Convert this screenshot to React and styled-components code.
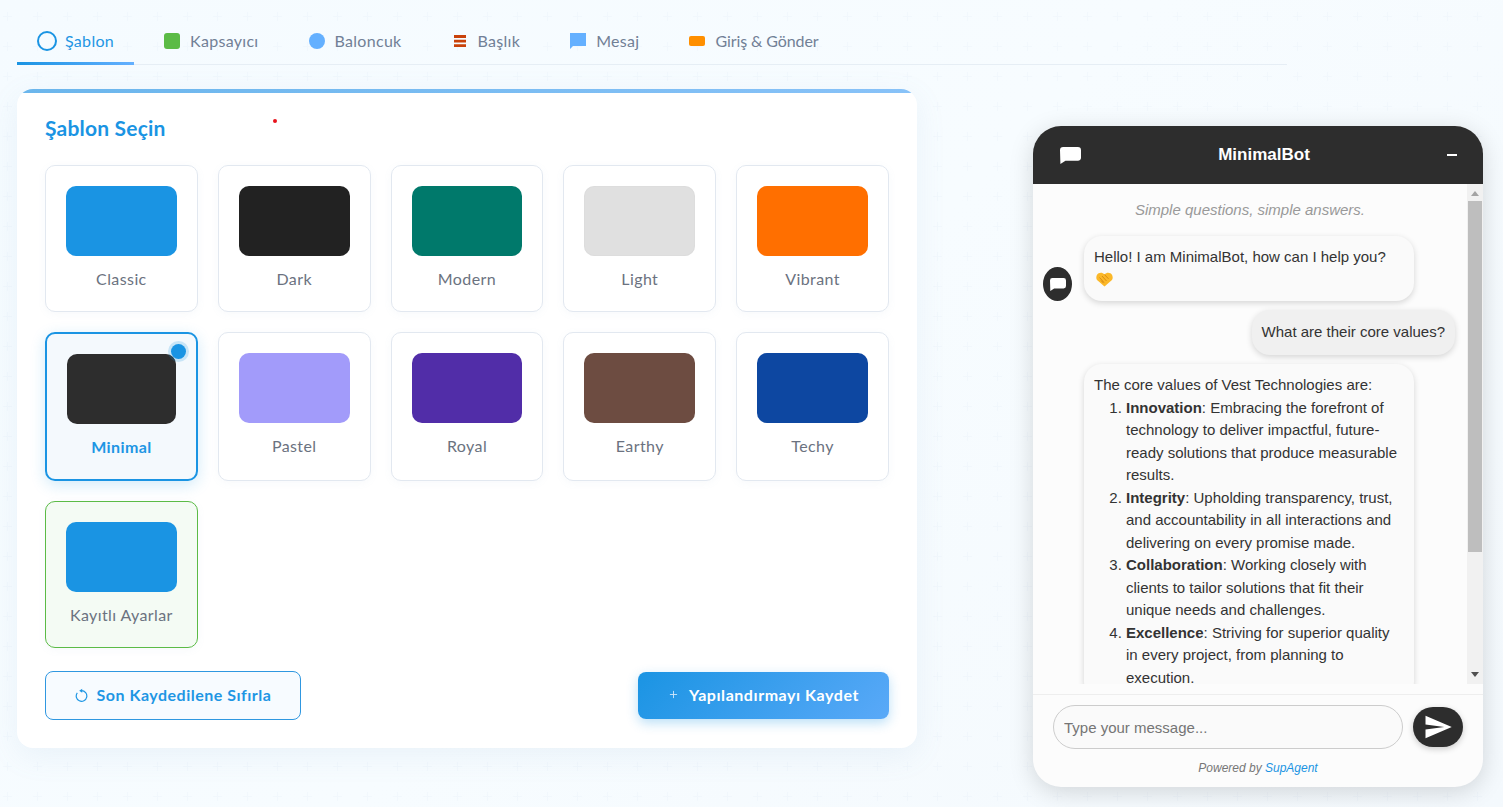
import React from "react";
import styled, { createGlobalStyle } from "styled-components";
import { MdSend } from "react-icons/md";
import { Plus } from "lucide-react";

const BLUE = "#1a94e3";
const UI_FONT = `"Lato", "Noto Sans", sans-serif`;
const CHAT_FONT = `"Liberation Sans", Arial, sans-serif`;

const PLUS_TILE = `url("data:image/svg+xml,%3Csvg width='30' height='30' xmlns='http://www.w3.org/2000/svg'%3E%3Cpath d='M7 3h1v9H7zM3 7h9v1H3z' fill='%23a9c4dc' fill-opacity='.08'/%3E%3C/svg%3E")`;

const templates = [
  { name: "Classic", color: "#1a94e3" },
  { name: "Dark", color: "#222222" },
  { name: "Modern", color: "#00796b" },
  { name: "Light", color: "#e0e0e0", edge: true },
  { name: "Vibrant", color: "#ff6f00" },
  { name: "Minimal", color: "#2d2d2d", selected: true },
  { name: "Pastel", color: "#a29bfa" },
  { name: "Royal", color: "#512da8" },
  { name: "Earthy", color: "#6d4c41" },
  { name: "Techy", color: "#0d47a1" },
  { name: "Kayıtlı Ayarlar", color: "#1a94e3", saved: true },
];

const values = [
  ["Innovation", ": Embracing the forefront of technology to deliver impactful, future-ready solutions that produce measurable results."],
  ["Integrity", ": Upholding transparency, trust, and accountability in all interactions and delivering on every promise made."],
  ["Collaboration", ": Working closely with clients to tailor solutions that fit their unique needs and challenges."],
  ["Excellence", ": Striving for superior quality in every project, from planning to execution."],
];

function BarsIcon() {
  return (
    <svg width="16" height="16" viewBox="0 0 16 16">
      <path d="M2 2h12v3H2zM2 6.8h12v2.6H2zM2 11.2h12V14H2z" fill="#c9420a" />
    </svg>
  );
}

function BubbleIcon() {
  return (
    <svg width="16" height="16" viewBox="0 0 16 16">
      <path d="M0 0h16v13H3l-3 3z" fill="#64b0ff" />
    </svg>
  );
}

function ChatGlyph({ width, height }) {
  return (
    <svg width={width} height={height} viewBox="0 0 20 16">
      <path d="M3 0h14a3 3 0 0 1 3 3v7a3 3 0 0 1-3 3H5.2L.4 16 0 3a3 3 0 0 1 3-3z" fill="#fff" />
    </svg>
  );
}

function ResetIcon() {
  return (
    <svg width="13" height="14" viewBox="0 0 13 14" fill="none">
      <path d="M2.3 4.8A5.3 5.3 0 1 0 6.5 2.7" stroke="#1e96e4" strokeWidth="1.2" />
      <path d="M7.2 .7v4L4.2 2.7z" fill="#1e96e4" />
    </svg>
  );
}

function HandshakeEmoji() {
  return (
    <Emoji width="17" height="15" viewBox="0 0 17 15">
      <path d="M8.5 14.6 1.6 8.6C-.5 6.6.1 2.5 2.6 1.2 4.6.2 6.8.6 8.5 2.2 10.2.6 12.4.2 14.4 1.2c2.5 1.3 3.1 5.4 1 7.4z" fill="#fbb829" />
      <path d="M3.5 5.5 8 10.5M6 4l4.5 5M8.5 2.6l4 4.2M5 8.5l2.5 2.6" stroke="#c9770f" strokeWidth=".7" fill="none" />
    </Emoji>
  );
}

function TemplateCard({ template }) {
  return (
    <Card $selected={template.selected} $saved={template.saved}>
      {template.selected && <SelectedDot />}
      <Swatch $color={template.color} $edge={template.edge} />
      <CardLabel $selected={template.selected}>{template.name}</CardLabel>
    </Card>
  );
}

export default function App() {
  return (
    <>
      <GlobalStyle />
      <Page>
        <Tabs>
          <Tab $active>
            <RingIcon />
            Şablon
          </Tab>
          <Tab>
            <ColorIcon $color="#5bbb46" $radius="3px" />
            Kapsayıcı
          </Tab>
          <Tab>
            <ColorIcon $color="#64b0ff" $radius="50%" />
            Baloncuk
          </Tab>
          <Tab>
            <BarsIcon />
            Başlık
          </Tab>
          <Tab>
            <BubbleIcon />
            Mesaj
          </Tab>
          <Tab $tight>
            <PillIcon />
            Giriş &amp; Gönder
          </Tab>
        </Tabs>

        <Content>
          <Panel>
            <RedDot />
            <PanelTitle>Şablon Seçin</PanelTitle>
            <TemplateGrid>
              {templates.map((t) => (
                <TemplateCard key={t.name} template={t} />
              ))}
            </TemplateGrid>
            <Actions>
              <ResetButton>
                <ResetIcon />
                Son Kaydedilene Sıfırla
              </ResetButton>
              <SaveButton>
                <Plus size={11} color="#cfe6fb" strokeWidth={2} />
                Yapılandırmayı Kaydet
              </SaveButton>
            </Actions>
          </Panel>

          <Chat>
            <ChatHeader>
              <ChatGlyph width={21} height={17} />
              <ChatTitle>MinimalBot</ChatTitle>
              <Minimize />
            </ChatHeader>
            <ChatBody>
              <Messages>
                <Tagline>Simple questions, simple answers.</Tagline>
                <BotRow>
                  <Avatar>
                    <ChatGlyph width={16} height={13} />
                  </Avatar>
                  <BotBubble>
                    Hello! I am MinimalBot, how can I help you?
                    <br />
                    <HandshakeEmoji />
                  </BotBubble>
                </BotRow>
                <UserBubble>What are their core values?</UserBubble>
                <BotRow>
                  <AvatarSlot />
                  <BotBubble>
                    The core values of Vest Technologies are:
                    <ValueList>
                      {values.map(([title, text]) => (
                        <li key={title}>
                          <strong>{title}</strong>
                          {text}
                        </li>
                      ))}
                    </ValueList>
                  </BotBubble>
                </BotRow>
              </Messages>
              <Scrollbar>
                <ScrollUp />
                <ScrollTrack>
                  <ScrollThumb />
                </ScrollTrack>
                <ScrollDown />
              </Scrollbar>
            </ChatBody>
            <Composer>
              <MessageInput placeholder="Type your message..." />
              <SendButton>
                <MdSend size={30} color="#fff" />
              </SendButton>
            </Composer>
            <Powered>
              Powered by <PoweredLink>SupAgent</PoweredLink>
            </Powered>
          </Chat>
        </Content>
      </Page>
    </>
  );
}

const GlobalStyle = createGlobalStyle`
  html, body {
    margin: 0;
    padding: 0;
  }
  * {
    box-sizing: border-box;
  }
`;

const Page = styled.div`
  width: 1503px;
  height: 807px;
  padding: 21px 20px 0 17px;
  overflow: hidden;
  font-family: ${UI_FONT};
  background-color: #f7fbff;
  background-image: ${PLUS_TILE}, linear-gradient(135deg, #f5fbff 0%, #f7fcff 50%, #f4f9fd 100%);
  background-position: 0 9px, 0 0;
`;

const Tabs = styled.div`
  display: flex;
  gap: 10px;
  width: 1270px;
  height: 44px;
  border-bottom: 1px solid #e6eef5;
`;

const Tab = styled.div`
  position: relative;
  display: flex;
  align-items: center;
  gap: 10px;
  height: 44px;
  padding: 0 20px 5px;
  font-size: 16px;
  font-weight: 400;
  letter-spacing: ${(p) => (p.$tight ? "-0.1px" : "0.3px")};
  color: ${(p) => (p.$active ? "#1e96e4" : "#718096")};
  ${(p) => p.$active && `
    gap: 8px;
    &::after {
      content: "";
      position: absolute;
      left: 0;
      right: 0;
      bottom: 0;
      height: 3px;
      background: linear-gradient(90deg, #1a94e3, #64b0ff);
    }
  `}
`;

const RingIcon = styled.span`
  width: 20px;
  height: 20px;
  border: 2px solid ${BLUE};
  border-radius: 50%;
`;

const ColorIcon = styled.span`
  width: 16px;
  height: 16px;
  background: ${(p) => p.$color};
  border-radius: ${(p) => p.$radius};
`;

const PillIcon = styled.span`
  width: 16px;
  height: 10px;
  background: #ff8f00;
  border-radius: 2px;
`;

const Content = styled.div`
  display: flex;
  justify-content: space-between;
  align-items: flex-start;
  margin-top: 24px;
`;

const Panel = styled.section`
  position: relative;
  width: 900px;
  padding: 28px;
  background: #fff;
  border-radius: 16px;
  overflow: hidden;
  box-shadow: 0 8px 30px rgba(120, 160, 200, 0.1);

  &::before {
    content: "";
    position: absolute;
    top: 0;
    left: 0;
    right: 0;
    height: 4px;
    background: linear-gradient(90deg, #6bb6ec, #88c2f8);
  }
`;

const RedDot = styled.span`
  position: absolute;
  left: 256px;
  top: 30px;
  width: 4px;
  height: 4px;
  border-radius: 50%;
  background: #e8121c;
`;

const PanelTitle = styled.h2`
  margin: -1px 0 25px;
  font-size: 21px;
  line-height: 24px;
  letter-spacing: 0.2px;
  font-weight: 700;
  color: ${BLUE};
`;

const TemplateGrid = styled.div`
  display: grid;
  grid-template-columns: repeat(5, 1fr);
  gap: 20px;
`;

const Card = styled.div`
  position: relative;
  padding: 20px;
  border: ${(p) => (p.$selected ? `2px solid ${BLUE}` : p.$saved ? "1px solid #5bbb46" : "1px solid #e2e8f0")};
  border-radius: 10px;
  background: ${(p) => (p.$selected ? "#f4f9fd" : p.$saved ? "#f4fbf4" : "#fff")};
  box-shadow: ${(p) => (p.$selected ? "0 4px 15px rgba(26, 148, 227, 0.2)" : "0 2px 8px rgba(120, 150, 190, 0.06)")};
  text-align: center;
`;

const SelectedDot = styled.span`
  position: absolute;
  top: 10px;
  right: 10px;
  width: 15px;
  height: 15px;
  border-radius: 50%;
  background: ${BLUE};
  box-shadow: 0 0 0 3px rgba(26, 148, 227, 0.2);
`;

const Swatch = styled.div`
  height: 70px;
  border-radius: 10px;
  background: ${(p) => p.$color};
  ${(p) => p.$edge && "box-shadow: inset 0 0 2px rgba(0, 0, 0, 0.06);"}
`;

const CardLabel = styled.div`
  margin: 11px 0 1px;
  font-size: 16px;
  line-height: 23px;
  letter-spacing: 0.4px;
  font-weight: ${(p) => (p.$selected ? 700 : 400)};
  color: ${(p) => (p.$selected ? "#1e96e4" : "#6b7280")};
`;

const Actions = styled.div`
  display: flex;
  justify-content: space-between;
  align-items: center;
  margin-top: 23px;
`;

const ResetButton = styled.button`
  display: flex;
  align-items: center;
  justify-content: center;
  gap: 9px;
  width: 256px;
  height: 49px;
  padding: 0 0 2px;
  border: 1px solid #2f97e0;
  border-radius: 8px;
  background: #f7fbff;
  color: #1e96e4;
  font-family: ${UI_FONT};
  font-size: 16px;
  font-weight: 700;
  letter-spacing: 0.5px;
`;

const SaveButton = styled.button`
  display: flex;
  align-items: center;
  justify-content: center;
  gap: 10px;
  width: 251px;
  height: 47px;
  padding: 0 0 2px;
  border: none;
  border-radius: 8px;
  background: linear-gradient(135deg, #1a94e3, #5aa9f8);
  color: #fff;
  font-family: ${UI_FONT};
  font-size: 16px;
  font-weight: 700;
  letter-spacing: 0.55px;
  box-shadow: 0 4px 12px rgba(26, 148, 227, 0.3);
`;

const Chat = styled.aside`
  display: flex;
  flex-direction: column;
  width: 450px;
  height: 661px;
  margin-top: 37px;
  background: #fcfcfc;
  border-radius: 28px;
  overflow: hidden;
  font-family: ${CHAT_FONT};
  box-shadow: 0 5px 25px rgba(0, 0, 0, 0.15);
`;

const ChatHeader = styled.header`
  display: flex;
  align-items: center;
  justify-content: space-between;
  flex: none;
  height: 58px;
  padding: 0 26px 0 27px;
  background: #2d2d2d;
`;

const ChatTitle = styled.div`
  font-size: 17px;
  font-weight: 700;
  color: #fff;
`;

const Minimize = styled.span`
  width: 10px;
  height: 2px;
  background: #fff;
`;

const ChatBody = styled.div`
  display: flex;
  flex: none;
  height: 500px;
`;

const Messages = styled.div`
  flex: 1;
  min-width: 0;
  padding: 16px 10px 0;
  overflow: hidden;
  font-size: 15px;
  line-height: 22.5px;
  color: #333;
`;

const Tagline = styled.div`
  margin-bottom: 16px;
  text-align: center;
  font-style: italic;
  line-height: 20px;
  color: #999;
`;

const BotRow = styled.div`
  display: flex;
  align-items: flex-end;
  gap: 12px;
`;

const Avatar = styled.div`
  display: flex;
  align-items: center;
  justify-content: center;
  flex: none;
  width: 29px;
  height: 34px;
  border-radius: 50%;
  background: #2d2d2d;
`;

const AvatarSlot = styled.div`
  flex: none;
  width: 29px;
`;

const BotBubble = styled.div`
  flex: none;
  width: 330px;
  padding: 10px;
  border-radius: 18px;
  background: #fafafa;
  box-shadow: 0 2px 6px rgba(0, 0, 0, 0.16);
`;

const UserBubble = styled.div`
  width: fit-content;
  margin: 9px 2px 9.5px auto;
  padding: 11px 10px;
  border-radius: 18px;
  background: #f0f0f0;
  box-shadow: 0 2px 6px rgba(0, 0, 0, 0.16);
`;

const Emoji = styled.svg`
  display: inline-block;
  margin-left: 2px;
  vertical-align: -2px;
`;

const ValueList = styled.ol`
  margin: 0;
  padding-left: 32px;
`;

const Scrollbar = styled.div`
  display: flex;
  flex-direction: column;
  flex: none;
  width: 16px;
  background: #f1f1f1;
`;

const ScrollUp = styled.span`
  flex: none;
  width: 0;
  height: 0;
  margin: 7px 4px 5px;
  border-left: 4px solid transparent;
  border-right: 4px solid transparent;
  border-bottom: 5px solid #a3a3a3;
`;

const ScrollDown = styled.span`
  flex: none;
  width: 0;
  height: 0;
  margin: 5px 4px 7px;
  border-left: 4px solid transparent;
  border-right: 4px solid transparent;
  border-top: 5px solid #505050;
`;

const ScrollTrack = styled.div`
  flex: 1;
`;

const ScrollThumb = styled.div`
  height: 351px;
  margin: 0 1px;
  background: #bebebe;
`;

const Composer = styled.div`
  display: flex;
  align-items: center;
  gap: 10px;
  flex: none;
  margin-top: 10px;
  padding: 10px 20px;
  border-top: 1px solid #eeeeee;
`;

const MessageInput = styled.input`
  flex: 1;
  min-width: 0;
  height: 44px;
  padding: 0 10px;
  border: 1px solid #cccccc;
  border-radius: 22px;
  background: #fafafa;
  font-family: ${CHAT_FONT};
  font-size: 15px;
  outline: none;

  &::placeholder {
    color: #757575;
  }
`;

const SendButton = styled.button`
  display: flex;
  align-items: center;
  justify-content: center;
  flex: none;
  width: 50px;
  height: 40px;
  padding: 0;
  border: none;
  border-radius: 20px;
  background: #2d2d2d;
  box-shadow: 0 2px 6px rgba(0, 0, 0, 0.2);
`;

const Powered = styled.div`
  margin-top: 2px;
  text-align: center;
  font-size: 12px;
  line-height: 14px;
  font-style: italic;
  color: #777;
`;

const PoweredLink = styled.span`
  color: ${BLUE};
`;
